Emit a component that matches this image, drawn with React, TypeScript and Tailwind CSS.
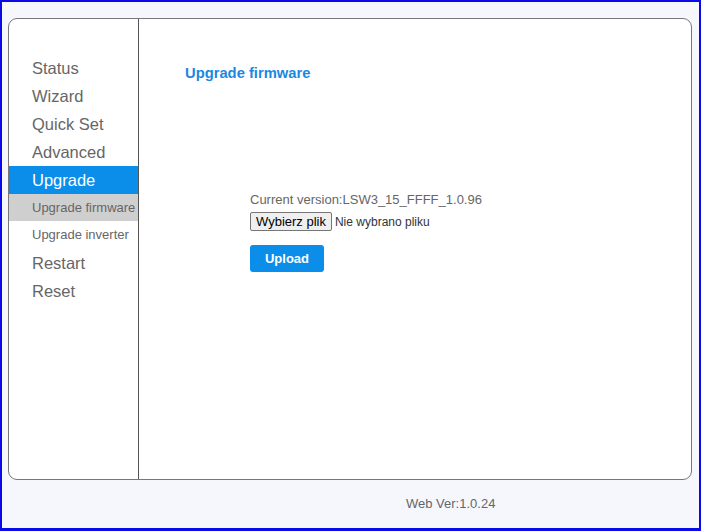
export default function App() {
  const top = ["Status", "Wizard", "Quick Set", "Advanced"];
  const bottom = ["Restart", "Reset"];
  return (
    <div
      className="w-[701px] h-[531px] border-2 border-b-[3px] border-[#0a0ae6] bg-[#f6f7fd] flex flex-col"
      style={{ fontFamily: '"Liberation Sans", Arial, sans-serif' }}
    >
      <div className="mt-[16px] ml-[6px] w-[684px] h-[462px] bg-white border border-[#777] rounded-[9px] flex overflow-hidden">
        <div className="w-[130px] border-r border-[#555] pt-[35px] flex flex-col shrink-0">
          {top.map((t) => (
            <div key={t} className="h-[28px] flex items-center pl-[23px] text-[16.5px] text-[#666]">
              {t}
            </div>
          ))}
          <div className="h-[28px] flex items-center pl-[23px] text-[16.5px] text-white bg-[#0a8eea]">
            Upgrade
          </div>
          <div className="h-[27px] flex items-center pl-[23px] text-[13px] text-[#666] bg-[#cfcfcf] whitespace-nowrap">
            Upgrade firmware
          </div>
          <div className="h-[28px] flex items-center pl-[23px] text-[13px] text-[#666] whitespace-nowrap">
            Upgrade inverter
          </div>
          {bottom.map((t) => (
            <div key={t} className="h-[28px] flex items-center pl-[23px] text-[16.5px] text-[#666]">
              {t}
            </div>
          ))}
        </div>
        <div className="flex-1 flex flex-col">
          <div className="mt-[43px] ml-[46px] text-[14.75px] font-bold text-[#1a88e0]">Upgrade firmware</div>
          <div className="mt-[108px] ml-[111px] flex flex-col items-start">
            <div className="text-[13px] text-[#666] leading-[16px]">Current version:LSW3_15_FFFF_1.0.96</div>
            <div className="mt-[4px] flex items-center gap-[3px]">
              <button className="h-[19px] px-[5px] text-[13px] text-black bg-[#efefef] border border-[#767676] rounded-[2px] leading-none">
                Wybierz plik
              </button>
              <span className="text-[12px] text-[#333]">Nie wybrano pliku</span>
            </div>
            <button className="mt-[14px] w-[74px] h-[27px] bg-[#0a8eea] rounded-[3px] text-white text-[13px] font-bold">
              Upload
            </button>
          </div>
        </div>
      </div>
      <div className="flex-1 flex items-center pl-[404px] text-[13px] text-[#666]">Web Ver:1.0.24</div>
    </div>
  );
}
